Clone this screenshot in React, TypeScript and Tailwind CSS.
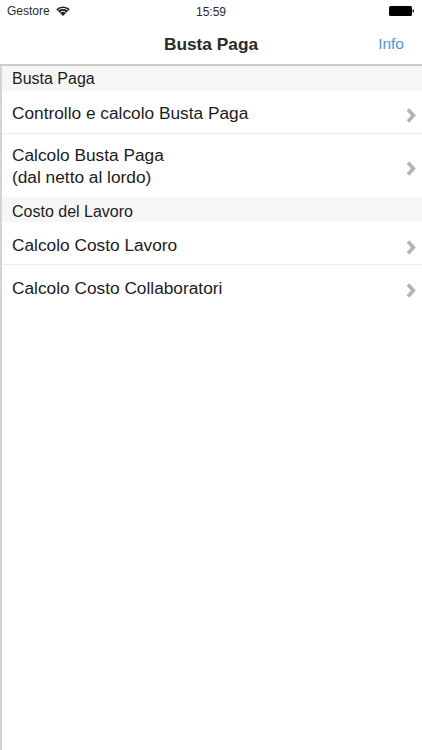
function Chevron() {
  return (
    <svg width="10" height="15" viewBox="0 0 10 15" className="shrink-0 mt-[5px]">
      <path d="M2 1.5 L7.4 7.5 L2 13.5" fill="none" stroke="#b4b4b4" strokeWidth="3.6" />
    </svg>
  );
}
function Section({ title, pad = "" }: { title: string; pad?: string }) {
  return (
    <div className={`h-[25px] bg-[#f6f6f6] pl-[10px] flex items-center text-[16px] leading-[25px] text-[#1c1c1c] ${pad}`}>{title}</div>
  );
}
function Row({ lines, h, pad = "", border = true }: { lines: string[]; h: string; pad?: string; border?: boolean }) {
  return (
    <div className={`${h} ${pad} ${border ? "border-b border-[#ededed]" : ""} pl-[10px] pr-[6px] flex items-center justify-between text-[17.3px] leading-[22px] text-[#1c1c1c]`}>
      <div>{lines.map((l) => <div key={l}>{l}</div>)}</div>
      <Chevron />
    </div>
  );
}
export default function App() {
  return (
    <div className="w-[422px] h-[750px] bg-white overflow-hidden font-['Liberation_Sans',sans-serif] flex flex-col">
      <div className="h-[22px] flex items-center justify-between pl-[7px] pr-[8px] text-[12px] text-[#2a2a2a] relative">
        <div className="flex items-center gap-[6px]">
          <span>Gestore</span>
          <svg width="14" height="10" viewBox="0 0 14 10">
            <path d="M7 10 L0.2 3.2 A9.6 9.6 0 0 1 13.8 3.2 Z" fill="#222" />
            <path d="M2.3 4.2 A7 7 0 0 1 11.7 4.2" fill="none" stroke="#fff" strokeWidth="1" />
            <path d="M4.3 6.3 A4 4 0 0 1 9.7 6.3" fill="none" stroke="#fff" strokeWidth="1" />
          </svg>
        </div>
        <span className="absolute left-[196px] top-[3px] font-medium">15:59</span>
        <svg width="25" height="10" viewBox="0 0 25 10">
          <rect x="0" y="0" width="23" height="10" rx="1.5" fill="#000" />
          <rect x="23.5" y="3.5" width="1.5" height="3" fill="#333" />
        </svg>
      </div>
      <div className="h-[44px] border-b-2 border-[#cbcbcb] flex items-center justify-center relative">
        <span className="font-bold text-[17.3px] text-[#2a2a2a] mt-[3px]">Busta Paga</span>
        <span className="absolute right-[18px] top-[10px] text-[15.5px] text-[#4a98e0]">Info</span>
      </div>
      <div className="flex-1 border-l-2 border-[#d4d4d4]">
        <Section title="Busta Paga" />
        <Row lines={["Controllo e calcolo Busta Paga"]} h="h-[43px]" pad="pt-[2px]" />
        <Row lines={["Calcolo Busta Paga", "(dal netto al lordo)"]} h="h-[63px]" border={false} />
        <Section title="Costo del Lavoro" pad="pt-[3px]" />
        <Row lines={["Calcolo Costo Lavoro"]} h="h-[43px]" pad="pt-[4px]" />
        <Row lines={["Calcolo Costo Collaboratori"]} h="h-[43px]" pad="pt-[2px]" border={false} />
      </div>
    </div>
  );
}
